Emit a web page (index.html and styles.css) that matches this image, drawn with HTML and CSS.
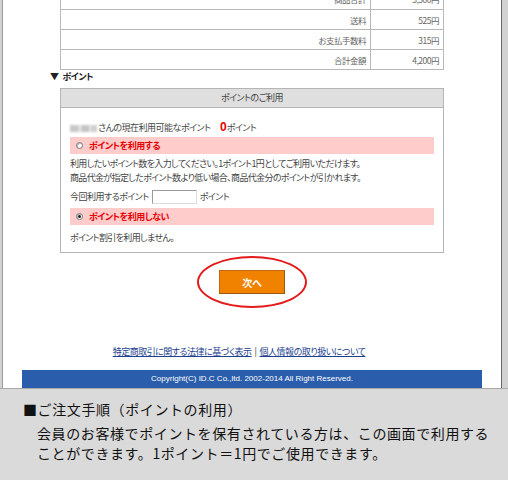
FILE: index.html
```html
<!DOCTYPE html>
<html lang="ja">
<head>
<meta charset="utf-8">
<link rel="stylesheet" href="styles.css">
</head>
<body>
<div class="screen">
  <div class="page">
    <table class="totals">
      <tr><th>商品合計</th><td>3,300円</td></tr>
      <tr><th>送料</th><td>525円</td></tr>
      <tr><th>お支払手数料</th><td>315円</td></tr>
      <tr><th>合計金額</th><td>4,200円</td></tr>
    </table>
    <div class="section-title"><span class="tri">▼</span>ポイント</div>
    <div class="pbox">
      <div class="pbox-head">ポイントのご利用</div>
      <div class="pbox-body">
        <p class="avail"><span class="blur"></span>さんの現在利用可能なポイント <b class="zero">0</b>ポイント</p>
        <div class="opt"><span class="radio"></span><span>ポイントを利用する</span></div>
        <p class="line first">利用したいポイント数を入力してください。1ポイント1円としてご利用いただけます。</p>
        <p class="line">商品代金が指定したポイント数より低い場合、商品代金分のポイントが引かれます。</p>
        <p class="use">今回利用するポイント <span class="field"></span> ポイント</p>
        <div class="opt opt2"><span class="radio on"></span><span>ポイントを利用しない</span></div>
        <p class="line last">ポイント割引を利用しません。</p>
      </div>
    </div>
    <div class="next-wrap">
      <div class="next">次へ<span class="ring"></span></div>
    </div>
    <div class="links"><a href="#">特定商取引に関する法律に基づく表示</a><span class="sep">|</span><a href="#">個人情報の取り扱いについて</a></div>
    <div class="copy">Copyright(C) ID.C Co.,ltd. 2002-2014 All Right Reserved.</div>
  </div>
</div>
<div class="note">
  <h1 class="note-title">■ご注文手順（ポイントの利用）</h1>
  <p class="note-text">会員のお客様でポイントを保有されている方は、この画面で利用する<br>ことができます。1ポイント＝1円でご使用できます。</p>
</div>
</body>
</html>
```

FILE: styles.css
```css
* { box-sizing: border-box; }
html, body { margin: 0; padding: 0; }
body {
  width: 508px;
  height: 480px;
  overflow: hidden;
  background: #dadada;
  font-family: "Noto Sans CJK JP", "Liberation Sans", sans-serif;
}
.screen {
  height: 389px;
  background: #d2d2d2;
  border-bottom: 1px solid #a9a9a9;
  padding-left: 2px;
  padding-right: 6px;
}
.page {
  height: 388px;
  overflow: hidden;
  background: #fff;
  border-left: 1px solid #9a9a9a;
  border-right: 1px solid #6a6a6a;
  font-size: 9px;
  letter-spacing: -0.5px;
  color: #444;
  font-feature-settings: "palt";
}
.totals {
  border-collapse: collapse;
  margin: -13px 0 0 57px;
  width: 384px;
  color: #666;
  font-size: 8.5px;
}
.totals th, .totals td {
  border: 1px solid #b8b8b8;
  height: 20px;
  padding: 0 4px;
  font-weight: normal;
  text-align: right;
  line-height: 12px;
}
.totals tr:first-child th, .totals tr:first-child td { height: 22px; }
.totals td { width: 73px; }
.section-title {
  margin: 1px 0 5px 47px;
  line-height: 12px;
  font-weight: bold;
  color: #222;
}
.tri { margin-right: 4px; }
.pbox {
  margin-left: 57px;
  width: 384px;
  border: 1px solid #b5b5b5;
}
.pbox-head {
  height: 19px;
  line-height: 18px;
  background: #dfdfdf;
  border-bottom: 1px solid #b5b5b5;
  text-align: center;
  color: #444;
}
.pbox-body { padding: 12px 9px 7px 9px; }
.pbox-body p { margin: 0; line-height: 14px; }
.pbox-body .line { letter-spacing: -0.65px; }
.blur {
  display: inline-block;
  width: 27px;
  height: 7px;
  margin-right: 1px;
  vertical-align: -1px;
  background: linear-gradient(90deg, #c8c8c8 0 30%, #ddd 30% 45%, #c4c4c4 45% 70%, #e6e6e6 70% 78%, #cfcfcf 78%);
  filter: blur(0.8px);
}
.zero {
  color: #e60000;
  font-size: 12px;
  font-family: "Liberation Sans", sans-serif;
  margin-left: 8px;
  letter-spacing: 0;
}
.opt {
  margin-top: 2px;
  height: 17px;
  background: #ffcccc;
  display: flex;
  align-items: center;
  gap: 6px;
  padding-left: 6px;
  color: #e60000;
  font-weight: bold;
}
.opt2 { margin-top: 4px; }
.radio {
  width: 7px;
  height: 7px;
  border-radius: 50%;
  background: #fff;
  border: 1px solid #777;
  box-shadow: inset 1px 1px 0 #bbb;
  display: flex;
  align-items: center;
  justify-content: center;
}
.radio.on::after {
  content: "";
  width: 3px;
  height: 3px;
  border-radius: 50%;
  background: #222;
}
.pbox-body .first { margin-top: 3px; }
.pbox-body .use {
  margin-top: 4px;
  display: flex;
  align-items: center;
  gap: 3px;
  height: 15px;
}
.field {
  display: inline-block;
  width: 45px;
  height: 14px;
  border: 1px solid #9a9a9a;
  border-right-color: #ddd;
  border-bottom-color: #ddd;
  background: #fff;
}
.pbox-body .last { margin-top: 6px; }
.next-wrap {
  display: flex;
  justify-content: center;
  margin-top: 17px;
}
.next {
  position: relative;
  width: 66px;
  height: 24px;
  background: #f08200;
  border: 1px solid #c06a10;
  border-right-color: #9a5a10;
  border-bottom-color: #9a5a10;
  color: #fff;
  font-weight: bold;
  font-size: 10px;
  letter-spacing: 0;
  display: flex;
  align-items: center;
  justify-content: center;
}
.ring {
  position: absolute;
  left: -23px;
  top: -15px;
  width: 110px;
  height: 52px;
  border: 2px solid #e41b1b;
  border-radius: 50%;
}
.links {
  margin-top: 52px;
  line-height: 12px;
  text-align: center;
  padding-right: 26px;
  color: #333;
}
.sep { margin: 0 3px; }
.links a { color: #1e3f8f; text-decoration: underline; }
.copy {
  margin: 12px 0 0 19px;
  width: 460px;
  height: 20px;
  background: #2a5dab;
  color: #fff;
  font-family: "Liberation Sans", sans-serif;
  font-size: 8px;
  letter-spacing: 0;
  line-height: 18px;
  text-align: center;
}
.note { padding: 10px 0 0 23px; color: #111; }
.note-title {
  margin: 0;
  font-size: 14px;
  font-weight: normal;
  line-height: 20px;
  letter-spacing: 0.6px;
}
.note-text {
  margin: 4px 0 0 14px;
  font-size: 14px;
  line-height: 20px;
  letter-spacing: 0.6px;
}
```
